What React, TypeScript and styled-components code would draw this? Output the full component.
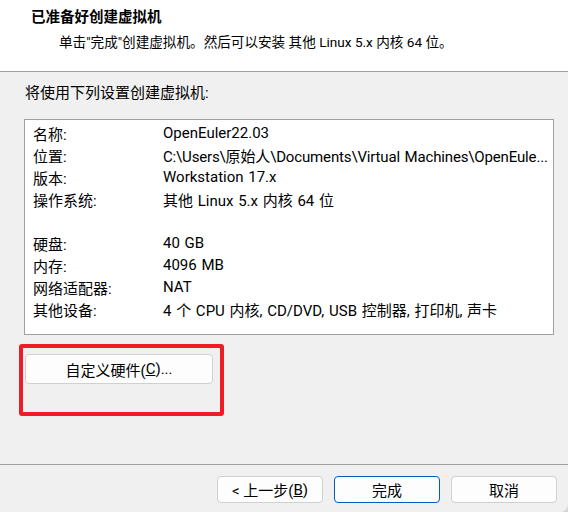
import React from "react";
import styled, { createGlobalStyle } from "styled-components";

const Global = createGlobalStyle`
  html, body { margin: 0; padding: 0; background: #d6d6d6; }
  body { font-family: Roboto, "Noto Sans CJK SC", sans-serif; font-size: 15px; color: #000; }
  * { box-sizing: border-box; }
`;

const Window = styled.div`
  width: 568px;
  height: 512px;
  display: flex;
  flex-direction: column;
  background: #f0f0f0;
  border-bottom-right-radius: 8px;
  overflow: hidden;
`;

const Header = styled.header`
  height: 72px;
  flex: none;
  background: #fff;
  border-bottom: 1px solid #a0a0a0;
  padding-top: 8px;
`;

const Title = styled.div`
  font-weight: bold;
  font-size: 14.5px;
  line-height: 20px;
  padding-left: 31px;
`;

const Subtitle = styled.div`
  font-size: 13.6px;
  line-height: 20px;
  margin-top: 4px;
  padding-left: 59px;
`;

const Body = styled.main`
  flex: 1;
  padding: 10px 14px 0 24px;
  display: flex;
  flex-direction: column;
`;

const Intro = styled.div`
  line-height: 22px;
  padding-left: 1px;
`;

const Summary = styled.div`
  margin-top: 15px;
  width: 530px;
  height: 216px;
  background: #fff;
  border: 1px solid #a0a0a0;
  padding: 2px 4px 0 8px;
  display: grid;
  grid-template-columns: 130px 1fr;
  grid-auto-rows: 22px;
  align-items: center;
`;

const Label = styled.div`
  white-space: nowrap;
`;

const Value = styled.div<{ $tight?: boolean }>`
  white-space: nowrap;
  overflow: hidden;
  word-spacing: 1px;
  letter-spacing: ${(p) => (p.$tight ? "-0.15px" : "0")};
`;

const Spacer = styled.div`
  grid-column: 1 / span 2;
`;

const CustomArea = styled.div`
  position: relative;
  margin-top: 19px;
  margin-left: 1px;
  width: 188px;
`;

const Button = styled.button<{ $primary?: boolean }>`
  font: inherit;
  color: #000;
  background: #fdfdfd;
  border: 1px solid ${(p) => (p.$primary ? "#005fb8" : "#d0d0d0")};
  border-radius: 4px;
  padding: 0;
  display: flex;
  align-items: center;
  justify-content: center;
`;

const CustomButton = styled(Button)`
  width: 188px;
  height: 30px;
`;

const Highlight = styled.div`
  position: absolute;
  left: -6px;
  top: -10px;
  width: 205px;
  height: 72px;
  border: 4px solid #ee1c25;
  border-radius: 3px;
  pointer-events: none;
`;

const Footer = styled.footer`
  height: 48px;
  flex: none;
  border-top: 1px solid #a0a0a0;
  padding: 11px 11px 0 0;
  display: flex;
  justify-content: flex-end;
  gap: 11px;
`;

const FooterButton = styled(Button)`
  width: 106px;
  height: 27px;
`;

type Row = { label: string; value: string; tight?: boolean };

const rows: Row[] = [
  { label: "名称:", value: "OpenEuler22.03" },
  { label: "位置:", value: "C:\\Users\\原始人\\Documents\\Virtual Machines\\OpenEule...", tight: true },
  { label: "版本:", value: "Workstation 17.x" },
  { label: "操作系统:", value: "其他 Linux 5.x 内核 64 位" },
];

const rows2: Row[] = [
  { label: "硬盘:", value: "40 GB" },
  { label: "内存:", value: "4096 MB" },
  { label: "网络适配器:", value: "NAT" },
  { label: "其他设备:", value: "4 个 CPU 内核, CD/DVD, USB 控制器, 打印机, 声卡" },
];

const renderRows = (list: Row[]) =>
  list.map((r) => (
    <React.Fragment key={r.label}>
      <Label>{r.label}</Label>
      <Value $tight={r.tight}>{r.value}</Value>
    </React.Fragment>
  ));

export default function App() {
  return (
    <>
      <Global />
      <Window>
        <Header>
          <Title>已准备好创建虚拟机</Title>
          <Subtitle>单击"完成"创建虚拟机。然后可以安装 其他 Linux 5.x 内核 64 位。</Subtitle>
        </Header>
        <Body>
          <Intro>将使用下列设置创建虚拟机:</Intro>
          <Summary>
            {renderRows(rows)}
            <Spacer />
            {renderRows(rows2)}
          </Summary>
          <CustomArea>
            <CustomButton>
              自定义硬件(<u>C</u>)...
            </CustomButton>
            <Highlight />
          </CustomArea>
        </Body>
        <Footer>
          <FooterButton>
            &lt; 上一步(<u>B</u>)
          </FooterButton>
          <FooterButton $primary>完成</FooterButton>
          <FooterButton>取消</FooterButton>
        </Footer>
      </Window>
    </>
  );
}
